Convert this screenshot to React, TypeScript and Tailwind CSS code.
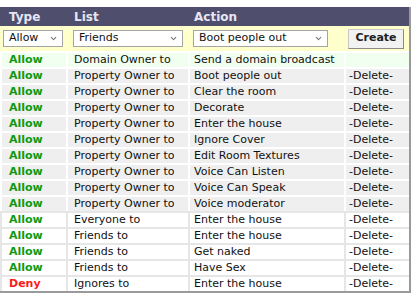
import { ChevronDown } from "lucide-react"

type Rule = { type: "Allow" | "Deny"; list: string; action: string; del: boolean; tone: "green" | "gray" | "white" }

const rules: Rule[] = [
  { type: "Allow", list: "Domain Owner to", action: "Send a domain broadcast", del: false, tone: "green" },
  { type: "Allow", list: "Property Owner to", action: "Boot people out", del: true, tone: "gray" },
  { type: "Allow", list: "Property Owner to", action: "Clear the room", del: true, tone: "gray" },
  { type: "Allow", list: "Property Owner to", action: "Decorate", del: true, tone: "gray" },
  { type: "Allow", list: "Property Owner to", action: "Enter the house", del: true, tone: "gray" },
  { type: "Allow", list: "Property Owner to", action: "Ignore Cover", del: true, tone: "gray" },
  { type: "Allow", list: "Property Owner to", action: "Edit Room Textures", del: true, tone: "gray" },
  { type: "Allow", list: "Property Owner to", action: "Voice Can Listen", del: true, tone: "gray" },
  { type: "Allow", list: "Property Owner to", action: "Voice Can Speak", del: true, tone: "gray" },
  { type: "Allow", list: "Property Owner to", action: "Voice moderator", del: true, tone: "gray" },
  { type: "Allow", list: "Everyone to", action: "Enter the house", del: true, tone: "white" },
  { type: "Allow", list: "Friends to", action: "Enter the house", del: true, tone: "white" },
  { type: "Allow", list: "Friends to", action: "Get naked", del: true, tone: "white" },
  { type: "Allow", list: "Friends to", action: "Have Sex", del: true, tone: "white" },
  { type: "Deny", list: "Ignores to", action: "Enter the house", del: true, tone: "white" },
]

function FakeSelect({ value, width }: { value: string; width: string }) {
  return (
    <div className={`flex h-[17px] items-center justify-between border border-[#a5a5a5] bg-white pl-[5px] pr-[4px] ${width}`}>
      <span>{value}</span>
      <ChevronDown className="h-[9px] w-[9px] text-[#7a7a7a]" strokeWidth={3} />
    </div>
  )
}

export default function App() {
  return (
    <div className="min-h-screen bg-white pt-[7px] text-[11px] text-[#111] [font-family:'DejaVu_Sans',Verdana,sans-serif]">
      <div className="w-[411px] border-r-2 border-b-2 border-[#9a9a9a]">
        {/* Header */}
        <div className="flex h-[19px] items-center gap-[2px] bg-[#4f4e6d] pl-[2px] text-[12px] font-bold text-[#e6e6f4]">
          <div className="w-[64px] pl-[7px]">Type</div>
          <div className="w-[120px] pl-[6px]">List</div>
          <div className="w-[154px] pl-[4px]">Action</div>
          <div className="w-[63px]" />
        </div>

        {/* New rule row */}
        <div className="flex h-[25px] items-center gap-[2px] bg-[#ffffcc] pl-[2px]">
          <div className="w-[64px] pl-[1px]">
            <FakeSelect value="Allow" width="w-[60px]" />
          </div>
          <div className="w-[120px] pl-[5px]">
            <FakeSelect value="Friends" width="w-[110px]" />
          </div>
          <div className="w-[154px] pl-[3px]">
            <FakeSelect value="Boot people out" width="w-[135px]" />
          </div>
          <div className="w-[63px] pl-[2px]">
            <button className="h-[20px] w-[56px] border border-t-[#c8c8c8] border-l-[#c8c8c8] border-r-[#8a8a8a] border-b-[#8a8a8a] bg-[#f2f2f2] text-[11px] font-bold text-[#222]">
              Create
            </button>
          </div>
        </div>

        {/* Rules */}
        {rules.map((r, i) => {
          const wrap = r.tone === "white" ? "bg-[#e6e6e6]" : "bg-white"
          const cell =
            r.tone === "green" ? "bg-[#f0fff0]" : r.tone === "gray" ? "bg-[#efefef]" : "bg-white"
          return (
            <div key={i} className={`flex gap-[2px] pt-[2px] pl-[2px] ${wrap}`}>
              <div
                className={`flex h-[14px] w-[64px] items-center pl-[7px] font-bold ${cell} ${
                  r.type === "Allow" ? "text-[#119911]" : "text-[#ff1a1a]"
                }`}
              >
                {r.type}
              </div>
              <div className={`flex h-[14px] w-[120px] items-center pl-[6px] ${cell}`}>{r.list}</div>
              <div className={`flex h-[14px] w-[154px] items-center pl-[4px] whitespace-nowrap ${cell}`}>{r.action}</div>
              <div className={`flex h-[14px] w-[63px] items-center pl-[3px] ${cell}`}>{r.del ? "-Delete-" : ""}</div>
            </div>
          )
        })}
      </div>
    </div>
  )
}
